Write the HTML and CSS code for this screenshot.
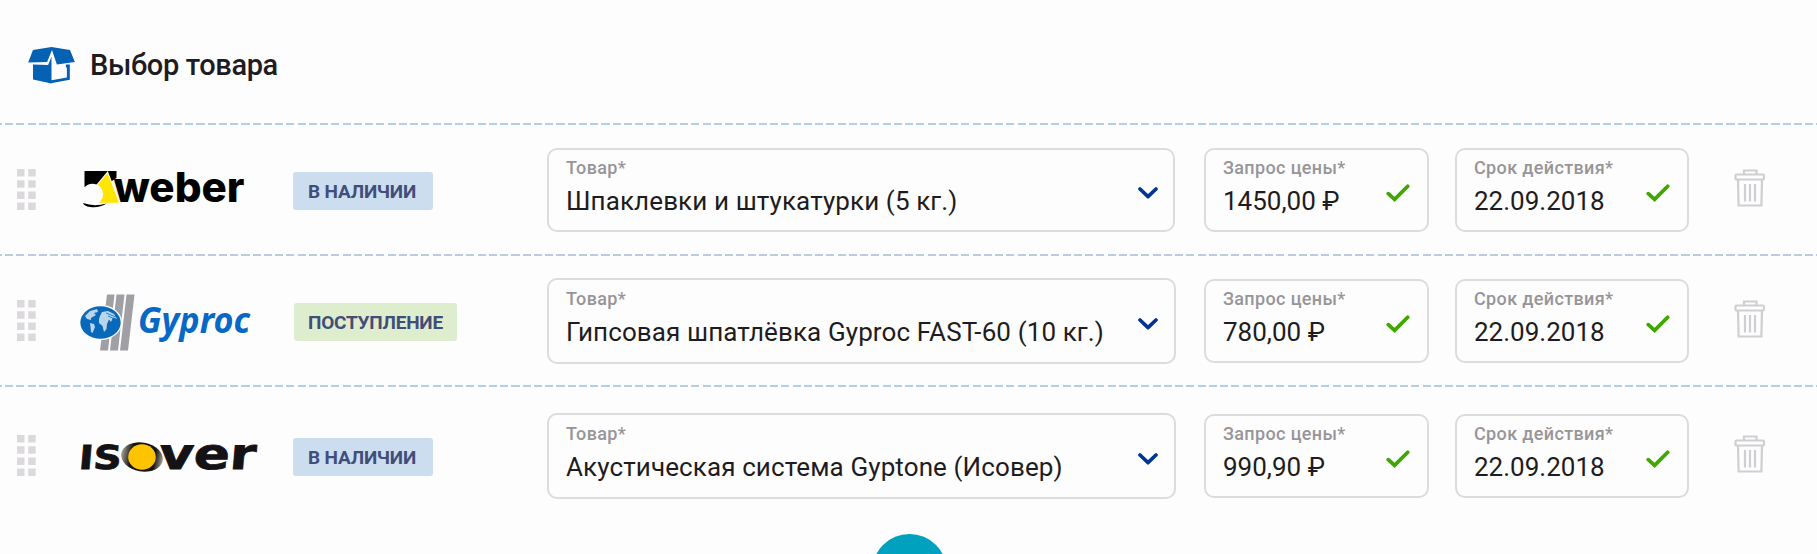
FILE: index.html
```html
<!DOCTYPE html>
<html lang="ru">
<head>
<meta charset="utf-8">
<title>Выбор товара</title>
<link rel="stylesheet" href="styles.css">
</head>
<body>
<svg class="defs" width="0" height="0">
  <symbol id="chevron" viewBox="0 0 20 12"><path d="M2 2L10 9.6L18 2" fill="none" stroke="#003594" stroke-width="3.6" stroke-linecap="round" stroke-linejoin="round"/></symbol>
  <symbol id="check" viewBox="0 0 24 18"><path d="M2.3 9.6L8.6 15.4L21.7 2.3" fill="none" stroke="#3fa800" stroke-width="3.7" stroke-linecap="round"/></symbol>
  <symbol id="trash" viewBox="0 0 32 39"><g fill="none" stroke="#cfced1" stroke-width="2.2"><path d="M10 5.500V1.500h12.500V5.500"/><rect x="1.500" y="5.500" width="28.500" height="5" rx="1.200"/><path d="M4 10.600L4.600 36.500H27.400L28 10.600"/><path d="M11 15V32.500M16 15V32.500M21 15V32.500"/></g></symbol>
  <symbol id="grip" viewBox="0 0 19 42"><path fill="#dbd9dc" d="M0 0h7.500v7.500H0zM11.200 0h7.500v7.500h-7.500zM0 11.200h7.500v7.500H0zM11.200 11.200h7.500v7.500h-7.500zM0 22.400h7.500v7.500H0zM11.200 22.400h7.500v7.500h-7.500zM0 33.600h7.500v7.500H0zM11.200 33.600h7.500v7.500h-7.500z"/></symbol>
</svg>
<main class="page">
  <header class="header">
    <svg class="box-icon" viewBox="0 0 48 38"><path fill="#0561b3" d="M24 0L43 3L48 15.500L29.500 18L24.500 3L19.500 15.500L0 16L5 3z"/><path fill="#0561b3" d="M5 18L20.500 18.500L24 10V37.500L5 33.500z"/><path d="M23 35.800L41.300 32.500V19.500H38.800" fill="none" stroke="#0561b3" stroke-width="3"/></svg>
    <h1 class="title">Выбор товара</h1>
  </header>

  <section class="row">
    <svg class="grip"><use href="#grip"/></svg>
    <svg class="logo" viewBox="0 0 190 60">
      <path d="M14.500 11H46.500V18L28 30L14.500 27z" fill="#000"/>
      <path d="M37.500 13L49 42.700H29L27 25.500z" fill="#ffe500" stroke="#fdfdfe" stroke-width="2" paint-order="stroke"/>
      <circle cx="22.500" cy="34.300" r="10.600" fill="#fdfdfe"/>
      <path d="M13 43Q24 47 36.500 43.500Q29 48.300 20 47Q14 46 13 43z" fill="#000"/>
      <text class="weber" x="43.500" y="42.300" textLength="131" lengthAdjust="spacingAndGlyphs">weber</text>
    </svg>
    <div class="badge-cell"><span class="badge">В НАЛИЧИИ</span></div>
    <div class="field product"><span class="label">Товар*</span><span class="value">Шпаклевки и штукатурки (5 кг.)</span><svg class="chevron"><use href="#chevron"/></svg></div>
    <div class="field price"><span class="label">Запрос цены*</span><span class="value">1450,00 ₽</span><svg class="check"><use href="#check"/></svg></div>
    <div class="field date"><span class="label">Срок действия*</span><span class="value">22.09.2018</span><svg class="check"><use href="#check"/></svg></div>
    <svg class="trash"><use href="#trash"/></svg>
  </section>

  <section class="row middle">
    <svg class="grip"><use href="#grip"/></svg>
    <svg class="logo" viewBox="0 0 190 60">
      <path fill="#a09fa4" d="M37 1.500H44.500L38 57.500H30zM46.500 1.500H54.500L48 57.500H40zM56.500 1.500H64.500L58 57.500H50z"/>
      <ellipse cx="30.500" cy="29.500" rx="21.500" ry="17.500" fill="#fdfdfe"/>
      <ellipse cx="30.500" cy="29.500" rx="20.200" ry="16.200" fill="#0868b9"/>
      <path fill="#b9d5ec" d="M15 23L20 18L27 16L28 19L24 20L26 22L21 25L21 27L17 26zM20 30L24 31L25 34L22.500 40L21 39L20.500 34zM30 23L32 19L38 18L44 21L47 26L43 24.500L41 29L39 26.500L37 31L36.500 36L34 39L32.500 33L29 30L29 26z"/>
      <path d="M36 20L46 24M38 23L47 27" stroke="#0868b9" stroke-width=".8"/>
      <text class="gyproc" x="68" y="40" textLength="112" lengthAdjust="spacingAndGlyphs">Gyproc</text>
    </svg>
    <div class="badge-cell"><span class="badge incoming">ПОСТУПЛЕНИЕ</span></div>
    <div class="field product tall"><span class="label">Товар*</span><span class="value">Гипсовая шпатлёвка Gyproc FAST-60 (10 кг.)</span><svg class="chevron"><use href="#chevron"/></svg></div>
    <div class="field price"><span class="label">Запрос цены*</span><span class="value">780,00 ₽</span><svg class="check"><use href="#check"/></svg></div>
    <div class="field date"><span class="label">Срок действия*</span><span class="value">22.09.2018</span><svg class="check"><use href="#check"/></svg></div>
    <svg class="trash"><use href="#trash"/></svg>
  </section>

  <section class="row last">
    <svg class="grip"><use href="#grip"/></svg>
    <svg class="logo" viewBox="0 0 190 60">
      <defs><linearGradient id="shade"><stop offset="0" stop-color="#a39f94"/><stop offset=".25" stop-color="#151315"/><stop offset=".8" stop-color="#151315"/><stop offset="1" stop-color="#a39f94"/></linearGradient></defs>
      <g transform="translate(0 39.300) skewX(-5)">
        <text class="isover" font-size="33" x="8" y="0" textLength="43" lengthAdjust="spacingAndGlyphs">IS</text>
        <text class="isover" font-size="43" x="88" y="0" textLength="97" lengthAdjust="spacingAndGlyphs">ver</text>
      </g>
      <ellipse cx="72" cy="27" rx="21" ry="14.500" fill="url(#shade)" transform="rotate(10 72 27)"/>
      <ellipse cx="72" cy="27" rx="13.800" ry="12.800" fill="#ffc400"/>
    </svg>
    <div class="badge-cell"><span class="badge">В НАЛИЧИИ</span></div>
    <div class="field product tall"><span class="label">Товар*</span><span class="value">Акустическая система Gyptone (Исовер)</span><svg class="chevron"><use href="#chevron"/></svg></div>
    <div class="field price"><span class="label">Запрос цены*</span><span class="value">990,90 ₽</span><svg class="check"><use href="#check"/></svg></div>
    <div class="field date"><span class="label">Срок действия*</span><span class="value">22.09.2018</span><svg class="check"><use href="#check"/></svg></div>
    <svg class="trash"><use href="#trash"/></svg>
  </section>
  <div class="add-wrap"><div class="add"></div></div>
</main>
</body>
</html>
```
FILE: styles.css
```css
* { box-sizing: border-box; }
body { margin: 0; background: #fdfdfe; font-family: Roboto, "Noto Sans", sans-serif; color: #1e1c20; }
.defs { display: block; height: 0; }
.page { height: 554px; overflow: hidden; }
.header { height: 123px; display: flex; align-items: center; padding: 8px 0 0 28px; }
.box-icon { width: 47px; height: 37px; margin-right: 15px; }
.title { margin: 0 0 1px; font-size: 29px; font-weight: 500; line-height: 36px; letter-spacing: -.37px; }
.row {
  height: 131px;
  padding: 25px 52px 0 17px;
  display: grid;
  grid-template-columns: 53px 223px 254px 628px 29px 225px 26px 234px 45px 31px;
  align-items: start;
  background: repeating-linear-gradient(90deg, #b0cfe9 0 8px, transparent 8px 11.250px) -6px 0 / calc(100% + 6px) 2px no-repeat;
}
.row.middle { background-image: repeating-linear-gradient(90deg, #bccbdd 0 8px, transparent 8px 11.250px); }
.row.last { padding-top: 29px; }
.grip { width: 19px; height: 42px; margin-top: 21px; }
.logo { width: 190px; height: 60px; margin-top: 12px; }
.middle .logo { margin-top: 14px; }
.last .logo { margin-top: 16px; }
.weber { font: 800 41px Inter, sans-serif; fill: #000; }
.gyproc { font: italic 700 36px "Noto Sans", sans-serif; fill: #0868c6; }
.isover { font-family: "DejaVu Sans", sans-serif; font-weight: 700; fill: #141214; stroke: #141214; stroke-width: .8px; }
.badge-cell { margin-top: 24px; }
.badge { display: inline-block; width: 140px; height: 38px; padding-left: 15px; border-radius: 3px; background: #ccddf0; color: #414e78; font-size: 19px; font-weight: 700; line-height: 39px; letter-spacing: -.17px; white-space: nowrap; }
.badge.incoming { width: 163px; margin-left: 1px; padding-left: 14px; background: #dfedcf; letter-spacing: -.23px; }
.field { position: relative; height: 84px; border: 2px solid #dddbdf; border-radius: 10px; padding: 8px 17px; display: flex; flex-direction: column; align-items: flex-start; white-space: nowrap; }
.product { grid-column: 4; }
.tall { height: 86px; margin: -1px -1px 0 0; padding-top: 9px; }
.price { grid-column: 6; }
.date { grid-column: 8; }
.label { font-size: 18px; line-height: 20px; color: #97959a; font-weight: 500; letter-spacing: .36px; }
.value { font-size: 26px; line-height: 30px; margin-top: 8px; }
.product .value { letter-spacing: .11px; }
.check { position: absolute; right: 17px; top: 34px; width: 24px; height: 18px; }
.chevron { position: absolute; right: 15px; top: 37px; width: 20px; height: 12px; }
.tall .chevron { right: 16px; top: 38px; }
.trash { grid-column: 10; width: 32px; height: 39px; margin-top: 21px; }
.add-wrap { display: flex; padding: 18px 0 0 872px; }
.add { width: 75px; height: 75px; border-radius: 50%; background: #00a1bf; flex: none; }
```
